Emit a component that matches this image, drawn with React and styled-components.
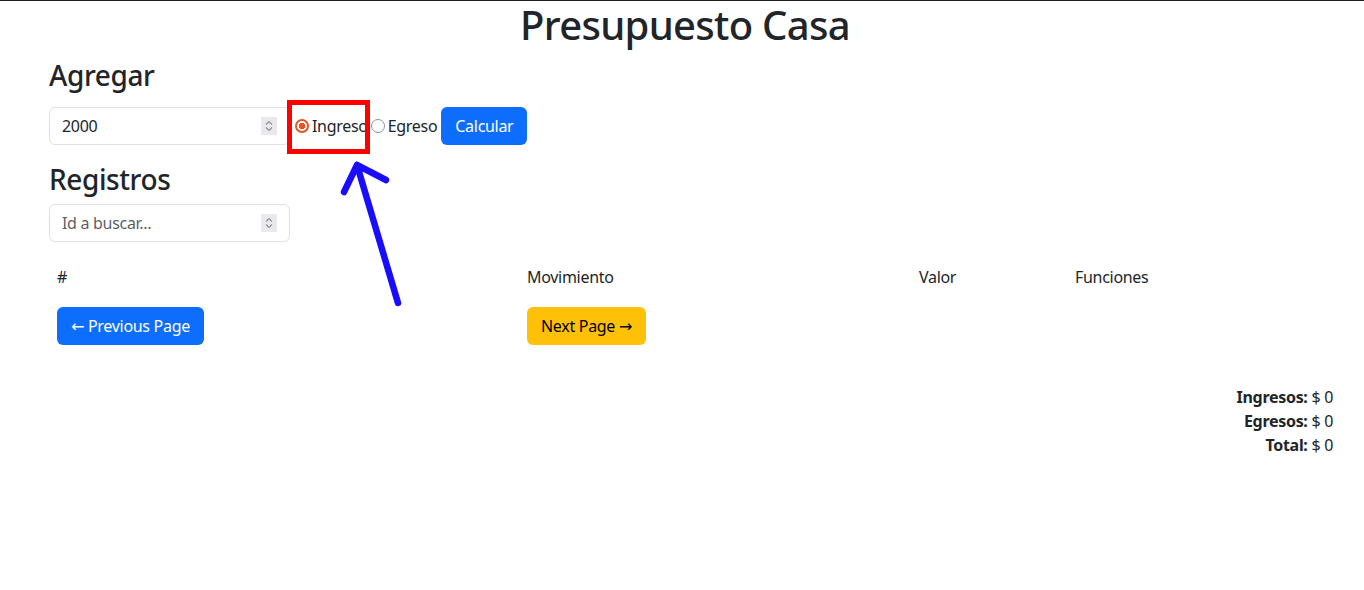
import React from "react"
import styled, { createGlobalStyle } from "styled-components"

const GlobalStyle = createGlobalStyle`
  html, body {
    margin: 0;
    padding: 0;
    background: #fff;
  }
  body {
    font-family: "Noto Sans", "Open Sans", "DejaVu Sans", sans-serif;
    font-size: 16px;
    line-height: 1.5;
    letter-spacing: -0.3px;
    color: #212529;
    border-top: 1px solid #1f1f1f;
  }
  * {
    box-sizing: border-box;
  }
`

const Spinner = () => (
  <SpinBox>
    <svg width="16" height="18" viewBox="0 0 16 18">
      <path
        d="M5 7.5 L8 4.5 L11 7.5 M5 10.5 L8 13.5 L11 10.5"
        fill="none"
        stroke="#8f8f9d"
        strokeWidth="1.2"
      />
    </svg>
  </SpinBox>
)

const NumberField = ({ ...props }) => (
  <Field>
    <NumberInput type="number" {...props} />
    <Spinner />
  </Field>
)

const App = () => {
  return (
    <Page>
      <GlobalStyle />
      <Title>Presupuesto Casa</Title>

      <SectionTitle>Agregar</SectionTitle>
      <FormRow>
        <NumberField defaultValue="2000" />
        <RadioGroup>
          <RadioLabel>
            <Radio type="radio" name="tipo" defaultChecked />
            Ingreso
          </RadioLabel>
          <RadioLabel>
            <Radio type="radio" name="tipo" />
            Egreso
          </RadioLabel>
          <Highlight />
          <Arrow width="70" height="160" viewBox="0 0 70 160">
            <path
              d="M61 154 L20 16 M20 16 L7 43 M20 16 L49 31"
              fill="none"
              stroke="#1a0dff"
              strokeWidth="6.5"
              strokeLinecap="round"
              strokeLinejoin="round"
            />
          </Arrow>
        </RadioGroup>
        <Button variant="primary">Calcular</Button>
      </FormRow>

      <SectionTitle>Registros</SectionTitle>
      <SearchRow>
        <NumberField placeholder="Id a buscar..." />
      </SearchRow>

      <Table>
        <thead>
          <tr>
            <Th width="470">#</Th>
            <Th width="392">Movimiento</Th>
            <Th width="156">Valor</Th>
            <Th>Funciones</Th>
          </tr>
        </thead>
        <tbody>
          <tr>
            <Td>
              <Button variant="primary">← Previous Page</Button>
            </Td>
            <Td>
              <Button variant="warning">Next Page →</Button>
            </Td>
            <Td />
            <Td />
          </tr>
        </tbody>
      </Table>

      <Totals>
        <div>
          <b>Ingresos:</b> $ 0
        </div>
        <div>
          <b>Egresos:</b> $ 0
        </div>
        <div>
          <b>Total:</b> $ 0
        </div>
      </Totals>
    </Page>
  )
}

export default App

const Page = styled.div`
  padding: 0 31px 0 49px;
`

const Title = styled.h1`
  margin: 0 -31px 10px -43px;
  font-size: 40px;
  font-weight: 500;
  line-height: 1.2;
  letter-spacing: -0.7px;
  text-align: center;
`

const SectionTitle = styled.h3`
  margin: 0 0 8px;
  font-size: 28px;
  font-weight: 500;
  line-height: 1.2;
  letter-spacing: -0.4px;
`

const FormRow = styled.div`
  display: flex;
  align-items: center;
  gap: 3px;
  height: 38px;
  margin: 14px 0 18px;
`

const SearchRow = styled.div`
  display: flex;
  height: 38px;
`

const Field = styled.div`
  position: relative;
  width: 241px;
  height: 38px;
`

const NumberInput = styled.input`
  width: 100%;
  height: 100%;
  padding: 6px 12px;
  font-family: inherit;
  font-size: 16px;
  letter-spacing: -0.3px;
  color: #212529;
  border: 1px solid #dee2e6;
  border-radius: 6px;
  outline: none;
  appearance: textfield;

  &::-webkit-inner-spin-button,
  &::-webkit-outer-spin-button {
    -webkit-appearance: none;
    margin: 0;
  }

  &::placeholder {
    color: rgba(33, 37, 41, 0.75);
  }
`

const SpinBox = styled.div`
  position: absolute;
  top: 10px;
  right: 13px;
  width: 16px;
  height: 18px;
  display: flex;
  background: #e9e9ed;
  pointer-events: none;
`

const RadioGroup = styled.div`
  position: relative;
  display: flex;
  align-items: center;
`

const RadioLabel = styled.label`
  display: flex;
  align-items: center;
  font-size: 16px;
  margin-right: 1px;
`

const Radio = styled.input`
  appearance: none;
  width: 14px;
  height: 14px;
  margin: 0 3px 0 2px;
  border-radius: 50%;
  border: 1.5px solid #8f8f9d;
  background: #fff;

  &:checked {
    border: 2px solid #e95420;
    background: radial-gradient(circle, #e95420 0 3px, #fff 3.5px);
  }
`

const Highlight = styled.div`
  position: absolute;
  left: -6px;
  top: -14px;
  width: 83px;
  height: 54px;
  border: 5px solid #ff0000;
  pointer-events: none;
`

const Arrow = styled.svg`
  position: absolute;
  left: 44px;
  top: 35px;
  pointer-events: none;
`

const Button = styled.button`
  height: 38px;
  padding: 6px 13px;
  font-family: inherit;
  font-size: 16px;
  line-height: 1.5;
  letter-spacing: -0.3px;
  border: 1px solid transparent;
  border-radius: 6px;
  cursor: pointer;
  color: ${(p) => (p.variant === "warning" ? "#000" : "#fff")};
  background: ${(p) => (p.variant === "warning" ? "#ffc107" : "#0d6efd")};
`

const Table = styled.table`
  width: 100%;
  margin-top: 15px;
  border-collapse: collapse;
`

const Th = styled.th`
  width: ${(p) => (p.width ? `${p.width}px` : "auto")};
  padding: 8px;
  font-weight: 400;
  text-align: left;
`

const Td = styled.td`
  padding: 10px 8px 8px;
`

const Totals = styled.div`
  margin-top: 32px;
  text-align: right;

  b {
    font-weight: 700;
  }
`
